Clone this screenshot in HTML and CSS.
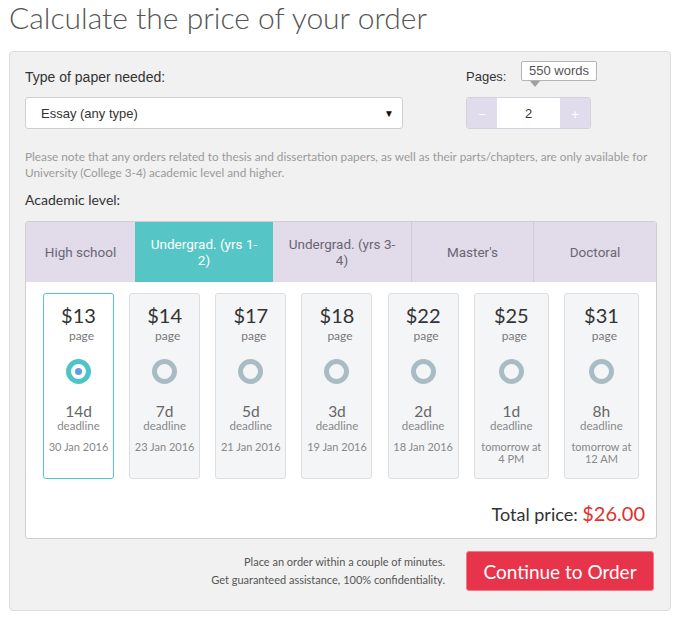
FILE: index.html
```html
<!DOCTYPE html>
<html>
<head>
<meta charset="utf-8">
<link rel="stylesheet" href="styles.css">
</head>
<body>
<h1 class="title">Calculate the price of your order</h1>
<div class="panel">
  <div class="top-row">
    <div class="paper-col">
      <div class="label paper-label">Type of paper needed:</div>
      <div class="select"><span>Essay (any type)</span><span class="caret">▼</span></div>
    </div>
    <div class="pages-col">
      <div class="label pages-label">Pages:<span class="tooltip">550 words</span></div>
      <div class="stepper">
        <span class="step-btn">−</span>
        <span class="step-input">2</span>
        <span class="step-btn">+</span>
      </div>
    </div>
  </div>
  <p class="note">Please note that any orders related to thesis and dissertation papers, as well as their parts/chapters, are only available for University (College 3-4) academic level and higher.</p>
  <div class="level-label">Academic level:</div>
  <div class="levels">
    <div class="tabs">
      <div class="tab t1">High school</div>
      <div class="tab t2 active">Undergrad. (yrs 1-2)</div>
      <div class="tab t3">Undergrad. (yrs 3-4)</div>
      <div class="tab t4">Master's</div>
      <div class="tab t5">Doctoral</div>
    </div>
    <div class="cards">
      <div class="card selected"><div class="price">$13</div><div class="per">page</div><div class="radio"><span class="dot"></span></div><div class="term">14d</div><div class="dl">deadline</div><div class="date">30 Jan 2016</div></div>
      <div class="card"><div class="price">$14</div><div class="per">page</div><div class="radio"></div><div class="term">7d</div><div class="dl">deadline</div><div class="date">23 Jan 2016</div></div>
      <div class="card"><div class="price">$17</div><div class="per">page</div><div class="radio"></div><div class="term">5d</div><div class="dl">deadline</div><div class="date">21 Jan 2016</div></div>
      <div class="card"><div class="price">$18</div><div class="per">page</div><div class="radio"></div><div class="term">3d</div><div class="dl">deadline</div><div class="date">19 Jan 2016</div></div>
      <div class="card"><div class="price">$22</div><div class="per">page</div><div class="radio"></div><div class="term">2d</div><div class="dl">deadline</div><div class="date">18 Jan 2016</div></div>
      <div class="card wide"><div class="price">$25</div><div class="per">page</div><div class="radio"></div><div class="term">1d</div><div class="dl">deadline</div><div class="date">tomorrow at<br>4 PM</div></div>
      <div class="card wide"><div class="price">$31</div><div class="per">page</div><div class="radio"></div><div class="term">8h</div><div class="dl">deadline</div><div class="date">tomorrow at<br>12 AM</div></div>
    </div>
    <div class="total">Total price: <span class="amount">$26.00</span></div>
  </div>
  <div class="footer">
    <div class="footer-text">Place an order within a couple of minutes.<br>Get guaranteed assistance, 100% confidentiality.</div>
    <div class="order-btn">Continue to Order</div>
  </div>
</div>
</body>
</html>
```

FILE: styles.css
```css
html, body {
  margin: 0;
  padding: 0;
  background: #ffffff;
}
body {
  font-family: "Lato", "Liberation Sans", sans-serif;
  color: #333;
}
.title {
  margin: 0;
  padding: 0 0 0 9px;
  height: 51px;
  line-height: 34px;
  font-family: "Lato", sans-serif;
  font-weight: 300;
  font-size: 30px;
  color: #555;
}
.panel {
  margin-left: 9px;
  width: 662px;
  height: 560px;
  box-sizing: border-box;
  border: 1px solid #dcdcdc;
  border-radius: 4px;
  background: #f1f1f1;
  padding: 17px 13px 0 15px;
}
.label {
  font-family: "Liberation Sans", sans-serif;
  font-size: 13px;
  line-height: 16px;
  color: #333;
}
.paper-label {
  font-size: 14px;
}
.top-row {
  display: flex;
}
.paper-col {
  width: 378px;
}
.select {
  margin-top: 12px;
  height: 32px;
  box-sizing: border-box;
  border: 1px solid #cfcfcf;
  border-radius: 3px;
  background: #fff;
  display: flex;
  align-items: center;
  justify-content: space-between;
  padding: 0 8px 0 15px;
  font-family: "Liberation Sans", sans-serif;
  font-size: 13px;
  color: #333;
}
.caret {
  font-size: 10px;
  color: #111;
}
.pages-col {
  margin-left: 63px;
}
.pages-label {
  position: relative;
}
.tooltip {
  position: absolute;
  left: 55px;
  top: -8px;
  width: 76px;
  height: 20px;
  box-sizing: border-box;
  border: 1px solid #b5b5b5;
  border-radius: 2px;
  background: #fff;
  font-size: 13px;
  line-height: 18px;
  text-align: center;
  color: #555;
}
.tooltip::after {
  content: "";
  position: absolute;
  left: 8px;
  top: 19px;
  border-left: 5px solid transparent;
  border-right: 5px solid transparent;
  border-top: 6px solid #a0a0a0;
}
.stepper {
  margin-top: 12px;
  display: flex;
  height: 32px;
  width: 125px;
  box-sizing: border-box;
  border: 1px solid #d4d0dc;
  border-radius: 3px;
  overflow: hidden;
}
.step-btn {
  width: 30px;
  background: #e1dcec;
  color: #fff;
  font-size: 14px;
  display: flex;
  align-items: center;
  justify-content: center;
}
.step-input {
  flex: 1;
  background: #fff;
  font-family: "Liberation Sans", sans-serif;
  font-size: 13px;
  display: flex;
  align-items: center;
  justify-content: center;
  color: #333;
}
.note {
  margin: 20px 0 0;
  font-family: "Lato", sans-serif;
  font-size: 11.8px;
  line-height: 16px;
  color: #9a9a9a;
}
.level-label {
  margin-top: 11px;
  font-family: "Lato", sans-serif;
  font-size: 14px;
  line-height: 16px;
  color: #333;
}
.levels {
  margin-top: 13px;
  border: 1px solid #cfcfcf;
  border-radius: 3px;
  background: #fff;
}
.tabs {
  display: flex;
  height: 60px;
  background: #e1dbea;
}
.tab {
  box-sizing: border-box;
  display: flex;
  align-items: center;
  justify-content: center;
  text-align: center;
  padding: 0 14px;
  font-family: "Roboto", "Liberation Sans", sans-serif;
  font-size: 13.5px;
  line-height: 16px;
  color: #6b6573;
  border-left: 1px solid #cfcad8;
}
.tab.t1 { width: 109px; border-left: none; }
.tab.t2 { width: 138px; }
.tab.t3 { width: 138px; }
.tab.t4 { width: 122px; }
.tab.t5 { flex: 1; }
.tab.active {
  background: #56c5c6;
  color: #fff;
  border-left: none;
}
.tab.active + .tab { border-left: none; }
.cards {
  display: flex;
  justify-content: space-between;
  padding: 11px 17px 0 17px;
}
.card {
  width: 71px;
  height: 186px;
  box-sizing: border-box;
  border: 1px solid #dedede;
  border-radius: 3px;
  background: #f4f5f7;
  display: flex;
  flex-direction: column;
  align-items: center;
  padding-top: 9px;
}
.card.wide { width: 75px; }
.card.selected {
  background: #fff;
  border-color: #56c5c6;
}
.price {
  font-size: 20px;
  line-height: 24px;
  color: #333;
}
.per {
  margin-top: 2px;
  padding-left: 6px;
  font-size: 12px;
  line-height: 14px;
  color: #777;
}
.radio {
  margin-top: 16px;
  width: 25px;
  height: 25px;
  box-sizing: border-box;
  border: 5px solid #a9bcc4;
  border-radius: 50%;
  display: flex;
  align-items: center;
  justify-content: center;
}
.selected .radio { border-color: #4fc4c5; }
.dot {
  width: 7px;
  height: 7px;
  border-radius: 50%;
  background: #5e9fe4;
}
.term {
  margin-top: 20px;
  font-size: 15.5px;
  line-height: 15px;
  color: #666;
}
.dl {
  font-size: 11.5px;
  line-height: 13px;
  color: #888;
}
.date {
  margin-top: 9px;
  font-size: 11px;
  line-height: 12px;
  color: #888;
  text-align: center;
}
.total {
  margin-top: 22px;
  margin-bottom: 12px;
  padding-right: 11px;
  text-align: right;
  font-size: 18px;
  line-height: 24px;
  color: #333;
}
.amount {
  color: #e0302b;
  font-size: 20px;
}
.footer {
  margin-top: 12px;
  display: flex;
  justify-content: flex-end;
  align-items: center;
  padding-right: 3px;
}
.footer-text {
  text-align: right;
  font-size: 11px;
  line-height: 18px;
  color: #555;
  margin-right: 21px;
}
.order-btn {
  width: 188px;
  height: 40px;
  box-sizing: border-box;
  border: 1px solid #f07a88;
  border-radius: 3px;
  background: #e8344a;
  color: #fff;
  font-size: 19px;
  display: flex;
  align-items: center;
  justify-content: center;
}
```
